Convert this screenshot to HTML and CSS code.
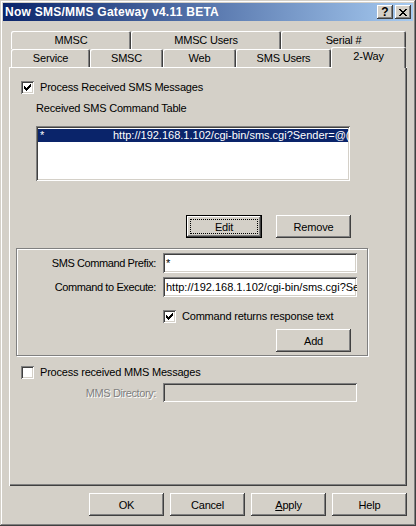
FILE: index.html
```html
<!DOCTYPE html>
<html lang="en">
<head>
  <meta charset="UTF-8" />
  <title>Now SMS/MMS Gateway v4.11 BETA</title>
  <link rel="stylesheet" href="styles.css">
</head>
<body>

  <div class="window">
    <div class="titlebar">
      <span class="title">Now SMS/MMS Gateway v4.11 BETA</span>
      <div class="cap-btns">
        <div class="cap-btn help">?</div>
        <div class="cap-btn">
          <svg width="8" height="7" viewBox="0 0 8 7" shape-rendering="crispEdges">
            <path fill="#000" d="M0 0h2v1H0zM6 0h2v1H6zM1 1h2v1H1zM5 1h2v1H5zM2 2h4v1H2zM3 3h2v1H3zM2 4h4v1H2zM1 5h2v1H1zM5 5h2v1H5zM0 6h2v1H0zM6 6h2v1H6z"/>
          </svg>
        </div>
      </div>
    </div>

    <div class="client">
      <div class="tabs">
        <div class="tab-row">
          <div class="tab" style="width:120px">MMSC</div>
          <div class="tab" style="width:150px">MMSC Users</div>
          <div class="tab" style="width:125px">Serial #</div>
        </div>
        <div class="tab-row">
          <div class="tab" style="width:79px">Service</div>
          <div class="tab" style="width:73px">SMSC</div>
          <div class="tab" style="width:73px">Web</div>
          <div class="tab" style="width:95px">SMS Users</div>
          <div class="tab active" style="width:75px">2-Way</div>
        </div>
      </div>

      <div class="panel">
        <div class="check-row">
          <span class="check checked">
            <svg width="13" height="13" viewBox="0 0 13 13" shape-rendering="crispEdges">
              <path fill="#000" d="M3 5h1v3H3zM4 6h1v3H4zM5 7h1v3H5zM6 6h1v3H6zM7 5h1v3H7zM8 4h1v3H8zM9 3h1v3H9z"/>
            </svg>
          </span>
          <span>Process Received SMS Messages</span>
        </div>

        <div class="section-label">Received SMS Command Table</div>

        <div class="list">
          <div class="list-row selected">
            <span class="cell">*</span>
            <span class="cell url">http://192.168.1.102/cgi-bin/sms.cgi?Sender=@(SENDER)&amp;Text=@(TEXT)</span>
          </div>
        </div>

        <div class="list-actions">
          <div class="btn default"><span class="focus">Edit</span></div>
          <div class="btn">Remove</div>
        </div>

        <div class="group">
          <div class="field-grid">
            <label class="field-label">SMS Command Prefix:</label>
            <div class="input">*</div>
            <label class="field-label">Command to Execute:</label>
            <div class="input url">http://192.168.1.102/cgi-bin/sms.cgi?Sender=@(SENDER)</div>
          </div>
          <div class="check-row inner">
            <span class="check checked">
              <svg width="13" height="13" viewBox="0 0 13 13" shape-rendering="crispEdges">
                <path fill="#000" d="M3 5h1v3H3zM4 6h1v3H4zM5 7h1v3H5zM6 6h1v3H6zM7 5h1v3H7zM8 4h1v3H8zM9 3h1v3H9z"/>
              </svg>
            </span>
            <span>Command returns response text</span>
          </div>
          <div class="btn add">Add</div>
        </div>

        <div class="check-row mms">
          <span class="check"></span>
          <span>Process received MMS Messages</span>
        </div>

        <div class="field-grid mms-dir">
          <label class="field-label disabled">MMS Directory:</label>
          <div class="input disabled"></div>
        </div>
      </div>

      <div class="footer">
        <div class="btn">OK</div>
        <div class="btn">Cancel</div>
        <div class="btn"><span><u>A</u>pply</span></div>
        <div class="btn">Help</div>
      </div>
    </div>
  </div>

</body>
</html>
```

FILE: styles.css
```css
html, body {
  margin: 0; padding: 0;
  background: #d4d0c8; color: #000;
  font: 11px "Liberation Sans", Arial, sans-serif;
  letter-spacing: -0.2px;
}

/* dialog frame */
.window {
  width: 416px; height: 526px;
  box-sizing: border-box; padding: 3px;
  background: #d4d0c8;
  box-shadow: inset -1px -1px #404040, inset 1px 1px #d4d0c8,
              inset -2px -2px #808080, inset 2px 2px #fff;
}

.titlebar {
  height: 18px; display: flex; align-items: center;
  padding: 0 2px;
  background: linear-gradient(to right, #0a246a, #a6caf0);
  color: #fff; font-weight: bold; font-size: 12px;
  letter-spacing: 0.25px;
}
.title { flex: 1; white-space: nowrap; }
.cap-btns { display: flex; gap: 2px; }
.cap-btn {
  width: 16px; height: 14px;
  display: flex; align-items: center; justify-content: center;
  background: #d4d0c8; color: #000;
  box-shadow: inset -1px -1px #404040, inset 1px 1px #fff,
              inset -2px -2px #808080, inset 2px 2px #d4d0c8;
}
.cap-btn.help { font-size: 12px; line-height: 14px; letter-spacing: 0; }

.client { padding: 10px 6px 0 6px; }

/* property sheet tabs */
.tabs { padding-left: 2px; }
.tab-row { display: flex; height: 18px; align-items: flex-start; }
.tab {
  height: 18px; box-sizing: border-box;
  display: flex; align-items: center; justify-content: center;
  background: #d4d0c8; white-space: nowrap;
  border-radius: 2px 2px 0 0;
  box-shadow: inset 1px 1px #fff, inset -1px 0 #404040, inset -2px 0 #808080;
}
.tab.active {
  height: 21px; margin-top: -2px; margin-bottom: -1px;
  padding-bottom: 3px;
  position: relative; z-index: 1;
}

.panel {
  height: 419px; box-sizing: border-box; padding-top: 14px;
  box-shadow: inset 1px 1px #fff, inset -1px -1px #404040, inset -2px -2px #808080;
}

/* checkboxes */
.check-row {
  display: flex; align-items: center; gap: 6px;
  height: 13px; line-height: 13px;
  margin-left: 12px; white-space: nowrap;
}
.check {
  width: 13px; height: 13px; flex: none; display: block;
  background: #fff;
  box-shadow: inset 1px 1px #808080, inset -1px -1px #fff,
              inset 2px 2px #404040, inset -2px -2px #d4d0c8;
}
.check svg { display: block; }

.section-label { margin: 8px 0 0 27px; height: 13px; line-height: 13px; }

/* list of commands */
.list {
  margin: 11px 0 0 27px;
  width: 314px; height: 55px;
  box-sizing: border-box; padding: 3px 2px 2px 2px;
  background: #fff; overflow: hidden;
  box-shadow: inset 1px 1px #808080, inset -1px -1px #fff,
              inset 2px 2px #404040, inset -2px -2px #d4d0c8;
}
.list-row {
  display: grid; grid-template-columns: 75px auto;
  height: 13px; line-height: 13px; white-space: nowrap;
}
.list-row.selected { background: #0a246a; color: #fff; }
.list-row .cell:first-child { padding-left: 2px; }
.url { letter-spacing: 0; }

/* push buttons */
.btn {
  width: 75px; height: 23px; box-sizing: border-box;
  display: flex; align-items: center; justify-content: center;
  background: #d4d0c8;
  box-shadow: inset -1px -1px #404040, inset 1px 1px #fff,
              inset -2px -2px #808080, inset 2px 2px #d4d0c8;
}
.btn.default { width: 76px; border: 1px solid #000; padding: 3px; }
.btn .focus {
  flex: 1; align-self: stretch;
  display: flex; align-items: center; justify-content: center;
  border: 1px dotted #000;
}

.list-actions { display: flex; gap: 14px; margin: 34px 0 0 177px; }

/* etched group box */
.group {
  margin: 10px 0 0 7px;
  width: 352px; height: 108px; box-sizing: border-box;
  padding-top: 4px;
  border: 1px solid #808080;
  box-shadow: inset 1px 1px #fff, 1px 1px #fff;
}

.field-grid {
  display: grid; grid-template-columns: 139px 194px;
  column-gap: 7px; row-gap: 4px;
}
.field-label { text-align: right; align-self: center; white-space: nowrap; letter-spacing: -0.4px; }
.input {
  height: 20px; box-sizing: border-box;
  padding-left: 3px; line-height: 20px;
  background: #fff; overflow: hidden; white-space: nowrap;
  box-shadow: inset 1px 1px #808080, inset -1px -1px #fff,
              inset 2px 2px #404040, inset -2px -2px #d4d0c8;
}
.input.disabled { background: #d4d0c8; height: 19px; }
.field-label.disabled { color: #808080; text-shadow: 1px 1px #fff; }

.check-row.inner { margin: 13px 0 0 146px; }
.btn.add { margin: 6px 0 0 259px; }

.check-row.mms { margin-top: 10px; }
.field-grid.mms-dir { margin: 4px 0 0 7px; grid-template-columns: 140px 194px; }

.footer { display: flex; justify-content: flex-end; gap: 6px; margin-top: 7px; }
```
